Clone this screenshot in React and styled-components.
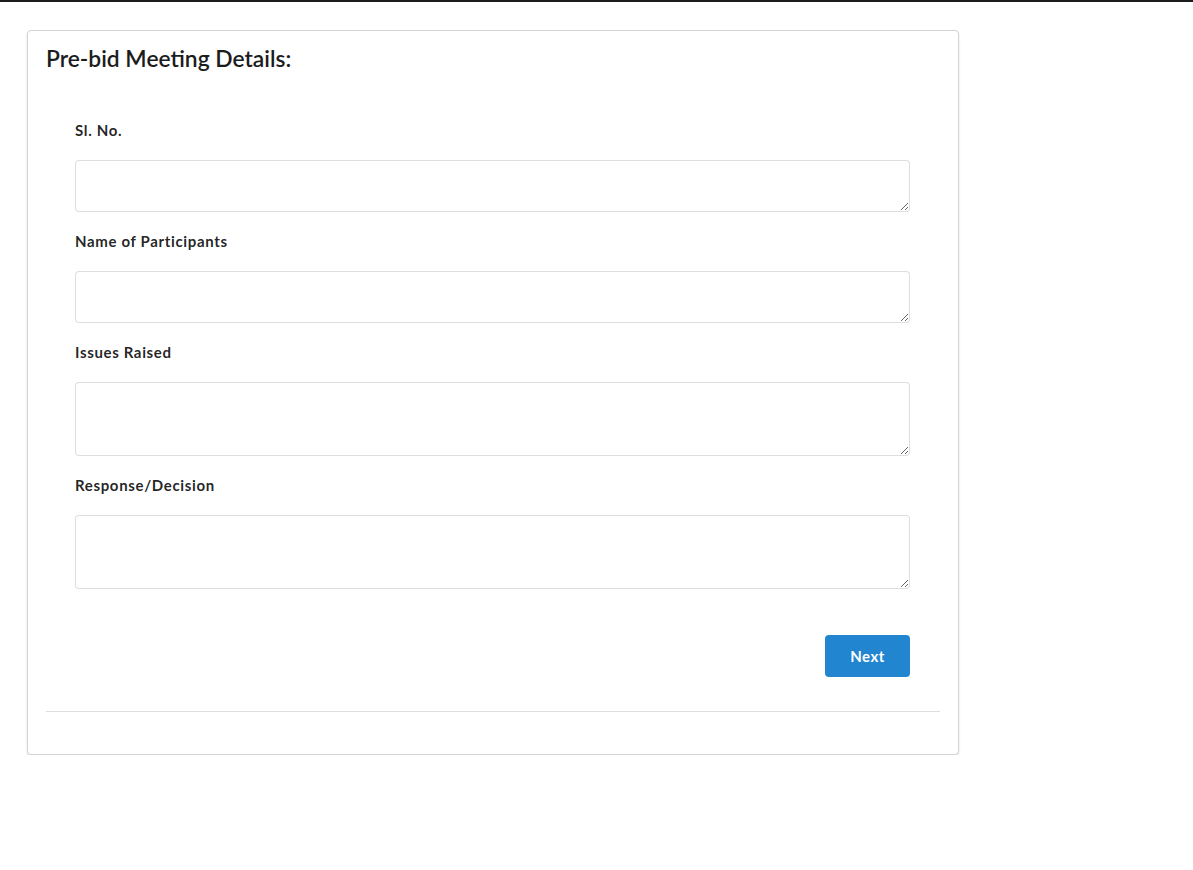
import styled, { createGlobalStyle } from "styled-components";

// global ------------------------------------------------
const GlobalStyle = createGlobalStyle`
  html, body {
    margin: 0;
    padding: 0;
    background: #ffffff;
    font-family: Lato, "Open Sans", "Helvetica Neue", Arial, sans-serif;
    color: rgba(0, 0, 0, 0.87);
  }
  * {
    box-sizing: border-box;
  }
`;

// components --------------------------------------------
const TopBar = styled.div`
  height: 2px;
  background-color: #1b1c1d;
`;
const Page = styled.div`
  padding: 28px 0 0 27px;
`;
const Card = styled.div`
  width: 932px;
  background: #fff;
  border: 1px solid #d4d4d5;
  border-radius: 4px;
  box-shadow: 0 1px 2px 0 rgba(34, 36, 38, 0.15);
  padding: 12px 18px 42px 18px;
`;
const Title = styled.h3`
  margin: 0;
  font-size: 22.8px;
  font-weight: 600;
  line-height: 30px;
  color: #1b1c1d;
`;
const Form = styled.form`
  display: flex;
  flex-direction: column;
  padding: 47px 30px 0 29px;
`;
const Field = styled.div`
  display: flex;
  flex-direction: column;
  margin-bottom: 19px;
`;
const Label = styled.label`
  font-size: 15px;
  font-weight: 700;
  letter-spacing: 0.65px;
  line-height: 20px;
  color: rgba(0, 0, 0, 0.87);
  margin-bottom: 20px;
`;
const TextArea = styled.textarea`
  display: block;
  width: 100%;
  height: ${(p) => p.$h}px;
  border: 1px solid rgba(34, 36, 38, 0.15);
  border-radius: 4px;
  padding: 10px 14px;
  font-family: inherit;
  font-size: 14px;
  outline: none;
  resize: vertical;
`;
const Actions = styled.div`
  display: flex;
  justify-content: flex-end;
  margin-top: 27px;
`;
const Button = styled.button`
  width: 85px;
  height: 42px;
  border: none;
  border-radius: 4px;
  background-color: #2185d0;
  color: #fff;
  font-family: inherit;
  font-size: 15px;
  font-weight: 700;
  letter-spacing: 0.5px;
  cursor: pointer;
`;
const Divider = styled.hr`
  margin: 34px 0 0 0;
  border: none;
  border-top: 1px solid rgba(34, 36, 38, 0.15);
`;

const fields = [
  { label: "Sl. No.", h: 52 },
  { label: "Name of Participants", h: 52 },
  { label: "Issues Raised", h: 74 },
  { label: "Response/Decision", h: 74 },
];

// function ----------------------------------------------
function App() {
  return (
    <>
      <GlobalStyle />
      <TopBar />
      <Page>
        <Card>
          <Title>Pre-bid Meeting Details:</Title>
          <Form onSubmit={(e) => e.preventDefault()}>
            {fields.map((f) => (
              <Field key={f.label}>
                <Label>{f.label}</Label>
                <TextArea $h={f.h} />
              </Field>
            ))}
            <Actions>
              <Button type="submit">Next</Button>
            </Actions>
          </Form>
          <Divider />
        </Card>
      </Page>
    </>
  );
}

export default App;
